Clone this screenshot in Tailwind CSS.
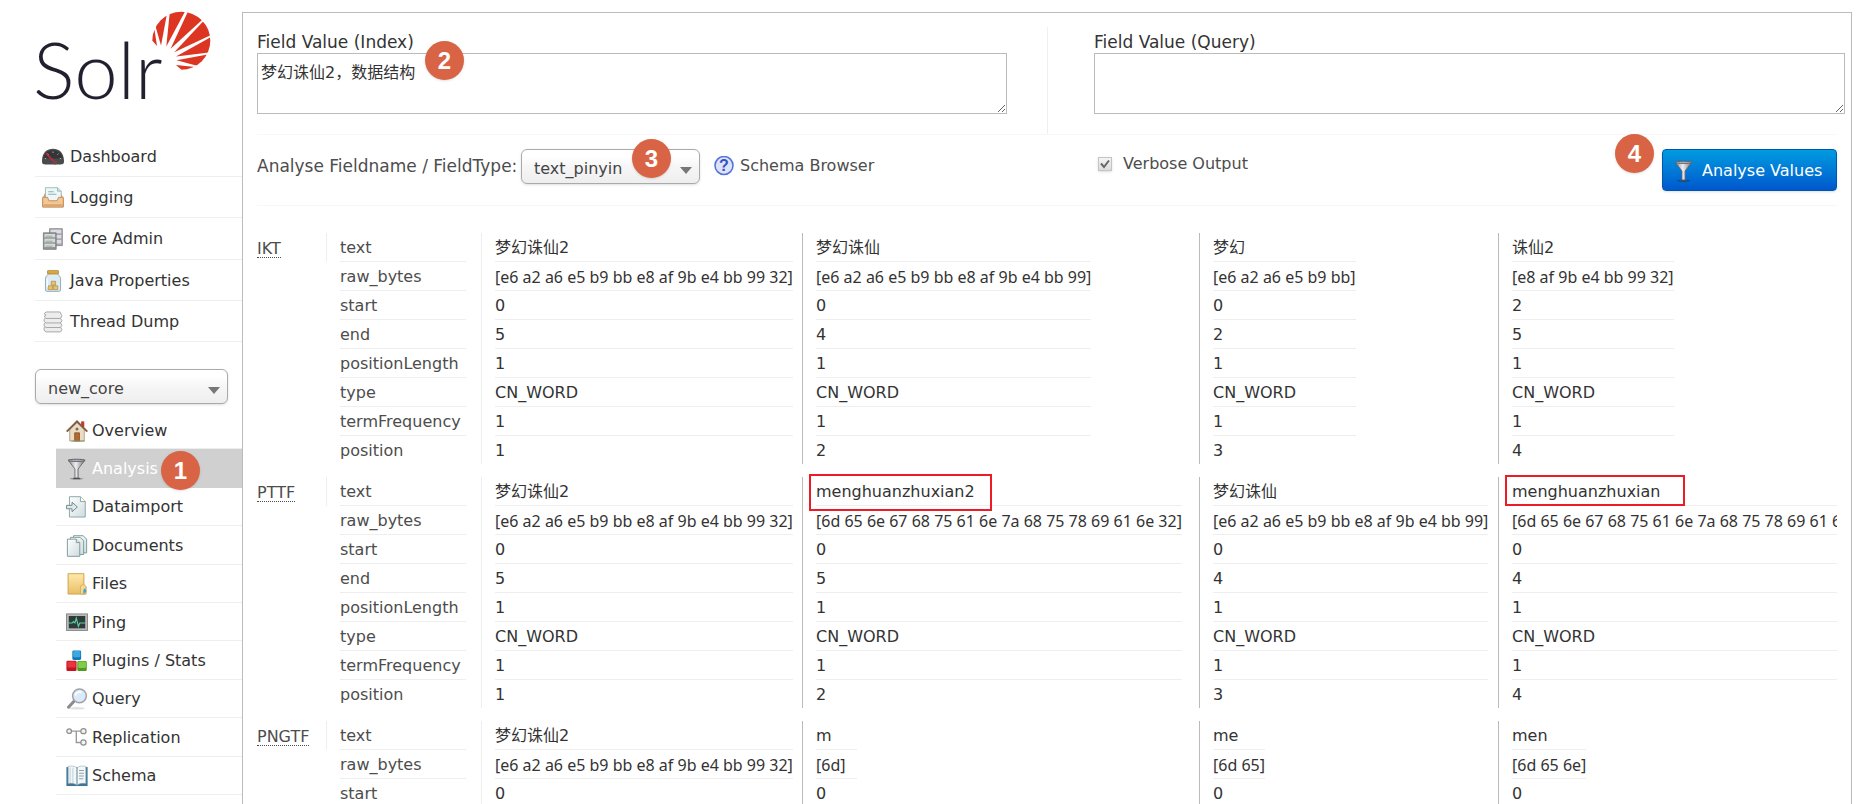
<!DOCTYPE html>
<html lang="en">
<head>
    <meta charset="UTF-8">
    <meta name="viewport" content="width=device-width, initial-scale=1.0">
    <title>Solr Admin</title>
    <script src="https://cdn.jsdelivr.net/npm/@tailwindcss/browser@4"></script>
</head>
<body class="bg-white text-[#333] text-base leading-5 font-['DejaVu_Sans','Noto_Sans_CJK_SC',sans-serif]">

    <!-- shared gradients and the funnel, used by the menu and the button -->
    <svg class="absolute w-0 h-0" aria-hidden="true">
        <defs>
            <linearGradient id="metal" x1="0" x2="1" y1="0" y2="0">
                <stop offset="0" stop-color="#8a8a90"/><stop offset=".45" stop-color="#efeff3"/><stop offset="1" stop-color="#75757b"/>
            </linearGradient>
            <linearGradient id="page" x1="0" x2="1" y1="0" y2="1">
                <stop offset="0" stop-color="#ffffff"/><stop offset="1" stop-color="#cfdcdf"/>
            </linearGradient>
            <linearGradient id="gold" x1="0" x2="0" y1="0" y2="1">
                <stop offset="0" stop-color="#ffe9ab"/><stop offset="1" stop-color="#e9bf68"/>
            </linearGradient>
            <symbol id="funnel" viewBox="0 0 16 16">
                <ellipse cx="7.6" cy="15.1" rx="5" ry=".7" fill="#000" opacity=".25"/>
                <path d="M1.800 1.800 6.500 8v6.600h2.300V8l4.800-6.200z" fill="url(#metal)" stroke="#5e5e64" stroke-width=".6"/>
                <ellipse cx="7.7" cy="1.7" rx="6.200" ry=".8" fill="#b4b4bc" stroke="#5e5e64" stroke-width=".7"/>
                <path d="M5.2 14.9h5.1" stroke="#4e4e55" stroke-width=".9"/>
            </symbol>
        </defs>
    </svg>

    <div class="flex h-screen overflow-hidden">
        <aside class="w-[242px] shrink-0 pl-[35px]">
            <a href="#" aria-label="Solr" class="block h-[136px]">
                <svg class="w-[180px] h-[110px] overflow-visible" viewBox="35 0 180 110">
                    <text x="33" y="99" class="font-['Lato'] font-light text-[78px]" fill="#221f2e">Solr</text>
                    <clipPath id="sun"><circle cx="181.3" cy="40.7" r="29"/></clipPath>
                    <g fill="#dc3522" clip-path="url(#sun)">
                        <path d="M157 46 150 38 154.500 30z"/>
                        <path d="M161 45.500 156 28 154 15 167.300 12z"/>
                        <path d="M166.300 46.500 170 10 185.800 10z"/>
                        <path d="M170.600 48.700 188.200 11 201 12 202 20z"/>
                        <path d="M174.300 52.300 203 21.500 212 24 211 35z"/>
                        <path d="M176 56.500 211 37 212 52z"/>
                        <path d="M176.500 60.300 209 54.300 206 62 198 66z"/>
                        <path d="M176 65 195 67 184 72z"/>
                    </g>
                </svg>
            </a>

            <ul class="grid auto-rows-fr h-[206px]">
                <li class="border-b border-[#eee]">
                    <a href="#" class="flex items-center h-full pl-[7px] pt-0.5 gap-1.5">
                        <svg class="size-[22px]" viewBox="0 0 16 16">
                            <path d="M0 11.500C-.200 5 3.500 2 8 2s8.200 3 8 9.500c0 1.500-1 2-2.500 2h-11C1 13.500 0 13 0 11.500z" fill="#4b4b4d"/>
                            <path d="M1 9C1.500 5 4.500 3 8 3s6.500 2 7 6z" fill="#353537"/>
                            <path d="M2 9l1 .2M4 5.500l.8.800M8 4v1M12 5.500l-.8.800M14 9l-1 .2" stroke="#9fc49f" stroke-width=".7"/>
                            <path d="M3 5.500 10.500 13" stroke="#c3283c" stroke-width="1.200"/>
                            <circle cx="9.500" cy="12" r="1.500" fill="#77444c"/>
                        </svg>
                        Dashboard
                    </a>
                </li>
                <li class="border-b border-[#eee]">
                    <a href="#" class="flex items-center h-full pl-[7px] pt-0.5 gap-1.5">
                        <svg class="size-[22px]" viewBox="0 0 16 16">
                            <path d="M.5 9 2.500 4.500h11L15.500 9v5.500H.5z" fill="#d9a672" stroke="#b9834d" stroke-width=".6"/>
                            <path d="M2.500.5h9L14 3v8H2.500z" fill="#eef7f7" stroke="#8fb3b3" stroke-width=".6"/>
                            <path d="M11.300.6V3H14" fill="#d3e6e6" stroke="#8fb3b3" stroke-width=".6"/>
                            <path d="M4.500 3.500h4M4.500 5.300h6" stroke="#8db2b8" stroke-width=".8"/>
                            <path d="M.5 7.500h3.500l1 2.500h6l1-2.500h3.500v7H.5z" fill="#f1c797" stroke="#c68f58" stroke-width=".7"/>
                            <path d="M1 12.500h14v1.800H1z" fill="#dda56c"/>
                        </svg>
                        Logging
                    </a>
                </li>
                <li class="border-b border-[#eee]">
                    <a href="#" class="flex items-center h-full pl-[7px] pt-0.5 gap-1.5">
                        <svg class="size-[22px]" viewBox="0 0 16 16">
                            <path d="M5.500.5h9.300v12.300H5.500z" fill="#a9a9ad" stroke="#858589" stroke-width=".6"/>
                            <path d="M6.300 1.300h7.700v2.500H6.300zM6.300 5h7.700v2.500H6.300zM6.300 8.700h7.700v2.500H6.300z" fill="#dcdce8"/>
                            <path d="M1 3.500h9.300v12H1z" fill="#97979b" stroke="#77777b" stroke-width=".6"/>
                            <path d="M1.800 4.300h7.700v2.400H1.800zM1.800 7.900h7.700v2.400H1.800zM1.800 11.500h7.700v2.400H1.800z" fill="#d4dcd8"/>
                            <path d="M2.600 6h5M2.600 9.600h5M2.600 13.200h5" stroke="#8aa38f" stroke-width=".6"/>
                        </svg>
                        Core Admin
                    </a>
                </li>
                <li class="border-b border-[#eee]">
                    <a href="#" class="flex items-center h-full pl-[7px] pt-0.5 gap-1.5">
                        <svg class="size-[22px]" viewBox="0 0 16 16">
                            <path d="M4.500 2.500h7c0 1.500 2 2 2 3.500v8.500c0 .6-.4 1-1 1h-9c-.6 0-1-.4-1-1V6c0-1.500 2-2 2-3.500z" fill="#dcebf5" stroke="#92a9b8" stroke-width=".7"/>
                            <rect x="4" y=".3" width="8" height="2.600" rx=".6" fill="#d8a740" stroke="#a97d26" stroke-width=".5"/>
                            <path d="M4.500 11.500h3.200v2.800H4.500zM8.300 11.500h3.200v2.800H8.300zM6.700 8.200h3.200V11H6.700z" fill="#e3c271" stroke="#b08b3f" stroke-width=".5"/>
                            <path d="M3.800 6.500v6" stroke="#fff" stroke-width=".8"/>
                        </svg>
                        Java Properties
                    </a>
                </li>
                <li class="border-b border-[#eee]">
                    <a href="#" class="flex items-center h-full pl-[7px] pt-0.5 gap-1.5">
                        <svg class="size-[22px]" viewBox="0 0 16 16">
                            <g fill="#ededed" stroke="#a5a5a5" stroke-width=".7">
                                <path d="M1.500 12 3 11h10l1.500 2.500-1 1.700H3L1.500 14z"/>
                                <path d="M1.500 9.300 3 8h10l1.500 2.300-1 1.700H3l-1.500-1.200z"/>
                                <path d="M1.500 6 3 4.700h10L14.500 7l-1 1.700H3L1.500 7.500z"/>
                                <path d="M1.500 2 3 .7h10L14.500 3.500l-1 1.900H3L1.500 4 3 3z"/>
                            </g>
                        </svg>
                        Thread Dump
                    </a>
                </li>
            </ul>

            <div class="relative mt-[27px] mr-3.5">
                <select aria-label="Core Selector" class="appearance-none block w-full h-[35px] rounded-md border border-[#aaa] bg-linear-to-b from-white from-20% via-[#f6f6f6] via-50% to-[#eee] pl-3 pt-1 text-[#444] shadow-sm">
                    <option>new_core</option>
                </select>
                <svg class="absolute right-2 top-[18px] w-3 h-[7px] pointer-events-none" viewBox="0 0 12 7"><path d="M0 0h12L6 7z" fill="#777"/></svg>
            </div>

            <ul class="grid auto-rows-fr h-[384px] mt-[7px] ml-[21px]">
                <li class="border-b border-[#eee]">
                    <a href="#" class="flex items-center h-full pl-2.5 pt-0.5 gap-1">
                        <svg class="size-[22px]" viewBox="0 0 16 16">
                            <path d="M11 1h2.300v4H11z" fill="#c33b30"/>
                            <path d="M2.700 7 8 2l5.300 5v8.300H2.700z" fill="#eadbc4" stroke="#a08467" stroke-width=".5"/>
                            <path d="M.5 8.500 8 1l7.500 7.500" fill="none" stroke="#7d5a42" stroke-width="1.400"/>
                            <path d="M6.300 9.300h3.500v6H6.300z" fill="#b5682f" stroke="#7c431a" stroke-width=".5"/>
                            <circle cx="8" cy="6.500" r="1.100" fill="#7c6a5c"/>
                            <path d="M4 15.300h9.500" stroke="#8d9d72" stroke-width=".8"/>
                        </svg>
                        Overview
                    </a>
                </li>
                <li class="relative bg-[#d0d0d0]">
                    <a href="#" class="flex items-center h-full pl-2.5 gap-1 text-white">
                        <svg class="size-[22px]"><use href="#funnel"/></svg>
                        Analysis
                    </a>
                    <span class="absolute left-[105px] top-0.5 flex items-center justify-center size-[39px] rounded-full bg-[#d96445] text-white font-['Liberation_Sans'] font-bold text-2xl shadow">1</span>
                </li>
                <li class="border-b border-[#eee]">
                    <a href="#" class="flex items-center h-full pl-2.5 pt-0.5 gap-1">
                        <svg class="size-[22px]" viewBox="0 0 16 16">
                            <path d="M2.500.5h8L14 4v11.300H2.500z" fill="url(#page)" stroke="#8ea4a6" stroke-width=".7"/>
                            <path d="M10.500.5V4H14" fill="#fff" stroke="#8ea4a6" stroke-width=".7"/>
                            <path d="M.4 6.800h4V4.500L8.300 8l-3.900 3.500V9.300h-4z" fill="#dfe9e9" stroke="#71898c" stroke-width=".7"/>
                        </svg>
                        Dataimport
                    </a>
                </li>
                <li class="border-b border-[#eee]">
                    <a href="#" class="flex items-center h-full pl-2.5 pt-0.5 gap-1">
                        <svg class="size-[22px]" viewBox="0 0 16 16">
                            <g fill="url(#page)" stroke="#7f9a9c" stroke-width=".7">
                                <path d="M5.500.5h7L15 3v10H5.500z"/>
                                <path d="M3.300 1.700h7l2.500 2.500v10H3.300z"/>
                                <path d="M1 3h6.500L10 5.500v10H1z"/>
                                <path d="M7.500 3v2.500H10"/>
                            </g>
                        </svg>
                        Documents
                    </a>
                </li>
                <li class="border-b border-[#eee]">
                    <a href="#" class="flex items-center h-full pl-2.5 pt-0.5 gap-1">
                        <svg class="size-[22px]" viewBox="0 0 16 16">
                            <path d="M1.500.5H13v8l1.500 1.500v5.300h-13z" fill="url(#gold)" stroke="#cfa04a" stroke-width=".7"/>
                            <path d="M10.500 9.500 13 8l1.500 2v5.300h-4z" fill="#f6d88f" stroke="#cfa04a" stroke-width=".5"/>
                            <path d="M12.600 15.300v-3l1-1.300 1 1.300v1.500z" fill="#3fa4dc"/>
                        </svg>
                        Files
                    </a>
                </li>
                <li class="border-b border-[#eee]">
                    <a href="#" class="flex items-center h-full pl-2.5 pt-0.5 gap-1">
                        <svg class="size-[22px]" viewBox="0 0 16 16">
                            <rect x=".4" y="1.400" width="15.200" height="12" fill="#bdbdbd" stroke="#858585" stroke-width=".7"/>
                            <rect x="2" y="2.900" width="12" height="9" fill="#2f3a3a"/>
                            <path d="M2 8h2.500l1-1 1 1 1-3.500 1.500 6 1-2.500h4" fill="none" stroke="#5fd1a3" stroke-width=".8"/>
                        </svg>
                        Ping
                    </a>
                </li>
                <li class="border-b border-[#eee]">
                    <a href="#" class="flex items-center h-full pl-2.5 pt-0.5 gap-1">
                        <svg class="size-[22px]" viewBox="0 0 16 16">
                            <rect x=".3" y="7.800" width="7.400" height="7.500" rx="1" fill="#c5131f"/><rect x="1" y="8.300" width="6" height="4.500" rx=".8" fill="#ea3340"/>
                            <rect x="4.600" y=".3" width="6.400" height="6.900" rx="1" fill="#1578b8"/><rect x="5.200" y=".7" width="5.200" height="4.500" rx=".8" fill="#3ca8e2"/>
                            <rect x="8.200" y="8" width="6.900" height="7.300" rx="1" fill="#4e9a20"/><rect x="8.900" y="8.400" width="5.600" height="4.600" rx=".8" fill="#7fcc46"/>
                        </svg>
                        Plugins / Stats
                    </a>
                </li>
                <li class="border-b border-[#eee]">
                    <a href="#" class="flex items-center h-full pl-2.5 pt-0.5 gap-1">
                        <svg class="size-[22px]" viewBox="0 0 16 16">
                            <ellipse cx="8" cy="14.800" rx="6" ry=".9" fill="#000" opacity=".12"/>
                            <path d="M6 9.500 1.800 14" stroke="#8b8b8f" stroke-width="2.200" stroke-linecap="round"/>
                            <circle cx="9.800" cy="5.700" r="5" fill="#d9eaf8" stroke="#a3a3a9" stroke-width="1.100"/>
                            <path d="M6.800 5.500c.3-2 2.500-3 4.500-2.300" fill="none" stroke="#fff" stroke-width="1.200"/>
                        </svg>
                        Query
                    </a>
                </li>
                <li class="border-b border-[#eee]">
                    <a href="#" class="flex items-center h-full pl-2.5 pt-0.5 gap-1">
                        <svg class="size-[22px]" viewBox="0 0 16 16">
                            <path d="M4 3h7M7.500 3v8.300H11" fill="none" stroke="#9a9a9a" stroke-width="1"/>
                            <g fill="#f3f3f3" stroke="#8f8f8f" stroke-width=".9"><circle cx="2.300" cy="3" r="1.700"/><circle cx="12.700" cy="3" r="1.900"/><circle cx="12.700" cy="11.300" r="1.900"/></g>
                        </svg>
                        Replication
                    </a>
                </li>
                <li class="border-b border-[#eee]">
                    <a href="#" class="flex items-center h-full pl-2.5 pt-0.5 gap-1">
                        <svg class="size-[22px]" viewBox="0 0 16 16">
                            <path d="M.3 1.500h15.400v13.800H.3z" fill="#3f7495"/>
                            <path d="M1.600 1c2.500-.5 5-.2 6.400 1 1.400-1.200 3.900-1.500 6.400-1v12.500c-2.500-.4-5 0-6.400 1.200-1.400-1.200-3.900-1.600-6.400-1.200z" fill="#f4f7f8" stroke="#8fa6b0" stroke-width=".4"/>
                            <path d="M8 2v12.500" stroke="#88a0ab" stroke-width="1"/>
                            <path d="M3 2v11M5 2v11" stroke="#cadce4" stroke-width="1"/>
                            <path d="M9.500 4h3.500M9.500 6h3.500M9.500 8h3.500M9.500 10h3" stroke="#8ba0aa" stroke-width=".8"/>
                        </svg>
                        Schema
                    </a>
                </li>
            </ul>
        </aside>

        <main class="flex-1 min-w-0 mt-3 mr-3 border border-b-0 border-[#bbb] pl-3.5 pr-3.5 pt-3.5">
            <form>
                <div class="grid grid-cols-2 border-b border-[#f7f7f7]">
                    <div class="relative pr-10 pt-1 pb-5">
                        <label for="index-value" class="block h-[22px] leading-[22px] text-[17px]">Field Value (Index)</label>
                        <textarea id="index-value" class="block w-full h-[61px] border border-[#bbb] px-[3px] py-[9px]">梦幻诛仙2，数据结构</textarea>
                        <span class="absolute left-[168px] top-3.5 flex items-center justify-center size-[39px] rounded-full bg-[#d96445] text-white font-['Liberation_Sans'] font-bold text-2xl shadow">2</span>
                    </div>
                    <div class="border-l border-[#f0f0f0] pl-[46px] pt-1 pb-5">
                        <label for="query-value" class="block h-[22px] leading-[22px] text-[17px]">Field Value (Query)</label>
                        <div class="-mr-2">
                            <textarea id="query-value" class="block w-full h-[61px] border border-[#bbb] px-[3px] py-[9px]"></textarea>
                        </div>
                    </div>
                </div>

                <div class="grid grid-cols-2 h-[71px] border-b border-[#f7f7f7] text-[#4d4d4d]">
                    <div class="relative flex items-start pt-3.5">
                        <label for="field-type" class="pt-[7px] w-[264px] whitespace-nowrap text-[17px]">Analyse Fieldname / FieldType:</label>
                        <div class="relative w-[179px]">
                            <select id="field-type" class="appearance-none block w-full h-[35px] rounded-md border border-[#aaa] bg-linear-to-b from-white from-20% via-[#f6f6f6] via-50% to-[#eee] pl-3 pt-1 text-[#444] shadow-sm">
                                <option>text_pinyin</option>
                            </select>
                            <svg class="absolute right-2 top-[18px] w-3 h-[7px] pointer-events-none" viewBox="0 0 12 7"><path d="M0 0h12L6 7z" fill="#777"/></svg>
                        </div>
                        <a href="#" class="flex items-center gap-1.5 pl-3.5 pt-[7px]">
                            <svg class="size-5" viewBox="0 0 20 20">
                                <circle cx="10" cy="9.500" r="9" fill="#dfe3f6" stroke="#5474dc" stroke-width="1.600"/>
                                <text x="10" y="15" text-anchor="middle" class="font-['Liberation_Sans'] font-bold text-base" fill="#2f52c8">?</text>
                            </svg>
                            Schema Browser
                        </a>
                        <span class="absolute left-[375px] top-1 flex items-center justify-center size-[39px] rounded-full bg-[#d96445] text-white font-['Liberation_Sans'] font-bold text-2xl shadow">3</span>
                    </div>
                    <div class="relative flex items-start justify-between pt-3.5 pl-[51px]">
                        <label class="flex items-center gap-[11px] pt-[5px]">
                            <input type="checkbox" checked class="peer appearance-none size-3.5 border border-[#c4c4c4] bg-linear-to-b from-[#f4f4f4] to-[#dcdcdc] shadow-sm">
                            <svg class="absolute size-3.5 p-0.5 pointer-events-none hidden peer-checked:block" viewBox="0 0 10 10"><path d="M1 4.500 4 8l5-6.500" fill="none" stroke="#666" stroke-width="2"/></svg>
                            Verbose Output
                        </label>
                        <span class="absolute right-[183px] -top-px flex items-center justify-center size-[39px] rounded-full bg-[#d96445] text-white font-['Liberation_Sans'] font-bold text-2xl shadow">4</span>
                        <button type="button" class="flex items-center gap-[7px] h-[42px] w-[175px] pl-2.5 pt-0.5 rounded border border-[#0056ad] bg-linear-to-b from-[#019be0] to-[#0057cd] text-white whitespace-nowrap shadow">
                            <svg class="size-[22px]"><use href="#funnel"/></svg>
                            Analyse Values
                        </button>
                    </div>
                </div>
            </form>

            <table class="table-fixed w-full mt-[27px] text-left">
                <colgroup>
                    <col class="w-[70px]"><col class="w-[154px]"><col class="w-[321px]"><col class="w-[397px]"><col class="w-[299px]"><col>
                </colgroup>
                <tbody id="analysis-result"></tbody>
            </table>
        </main>
    </div>

    <script>
        const labels = ['text', 'raw_bytes', 'start', 'end', 'positionLength', 'type', 'termFrequency', 'position'];

        const stages = [
            { name: 'IKT', title: 'IKTokenizer', tokens: [
                ['梦幻诛仙2', '[e6 a2 a6 e5 b9 bb e8 af 9b e4 bb 99 32]', 0, 5, 1, 'CN_WORD', 1, 1],
                ['梦幻诛仙', '[e6 a2 a6 e5 b9 bb e8 af 9b e4 bb 99]', 0, 4, 1, 'CN_WORD', 1, 2],
                ['梦幻', '[e6 a2 a6 e5 b9 bb]', 0, 2, 1, 'CN_WORD', 1, 3],
                ['诛仙2', '[e8 af 9b e4 bb 99 32]', 2, 5, 1, 'CN_WORD', 1, 4]
            ]},
            { name: 'PTTF', title: 'PinyinTransformTokenFilter', tokens: [
                ['梦幻诛仙2', '[e6 a2 a6 e5 b9 bb e8 af 9b e4 bb 99 32]', 0, 5, 1, 'CN_WORD', 1, 1],
                ['menghuanzhuxian2', '[6d 65 6e 67 68 75 61 6e 7a 68 75 78 69 61 6e 32]', 0, 5, 1, 'CN_WORD', 1, 2],
                ['梦幻诛仙', '[e6 a2 a6 e5 b9 bb e8 af 9b e4 bb 99]', 0, 4, 1, 'CN_WORD', 1, 3],
                ['menghuanzhuxian', '[6d 65 6e 67 68 75 61 6e 7a 68 75 78 69 61 6e]', 0, 4, 1, 'CN_WORD', 1, 4]
            ]},
            { name: 'PNGTF', title: 'PinyinNGramTokenFilter', tokens: [
                ['梦幻诛仙2', '[e6 a2 a6 e5 b9 bb e8 af 9b e4 bb 99 32]', 0],
                ['m', '[6d]', 0],
                ['me', '[6d 65]', 0],
                ['men', '[6d 65 6e]', 0]
            ]}
        ];

        // red frames around the pinyin tokens
        const marks = {
            menghuanzhuxian2: '<span class="absolute left-[7px] -top-[3px] w-[183px] h-[37px] border-2 border-[#ed1c24]"></span>',
            menghuanzhuxian: '<span class="absolute left-[7px] -top-0.5 w-[180px] h-[31px] border-2 border-[#ed1c24]"></span>'
        };

        const list = (values, width) => `<table class="${width}">${values.map((value, i) => `
            <tr class="group"><td><div class="h-[29px] pt-[5px] whitespace-nowrap border-b border-[#eee] group-last:h-7 group-last:border-b-0 ${i === 1 ? 'bytes' : ''}">${value}</div></td></tr>`).join('')}</table>`;

        document.getElementById('analysis-result').innerHTML = stages.map(stage => `
            <tr>
                <th class="align-top font-normal text-[#4d4d4d]">
                    <div class="h-[29px] pt-1.5 border-r border-[#eee]"><abbr title="${stage.title}" class="inline-block h-[19px] no-underline border-b border-dotted border-[#4d4d4d]">${stage.name}</abbr></div>
                </th>
                <td class="align-top pl-[13px] text-[#4d4d4d]">${list(labels.slice(0, stage.tokens[0].length), 'w-[126px]')}</td>
                ${stage.tokens.map((token, i) => `
                <td class="relative align-top pb-[13px]">
                    <div class="border-l ${i ? 'border-[#bbb]' : 'border-[#eee]'} pl-[13px] overflow-hidden [&_.bytes]:font-['Noto_Sans']">${list(token, 'min-w-[41px]')}</div>
                    ${marks[token[0]] || ''}
                </td>`).join('')}
            </tr>`).join('');
    </script>
</body>
</html>
